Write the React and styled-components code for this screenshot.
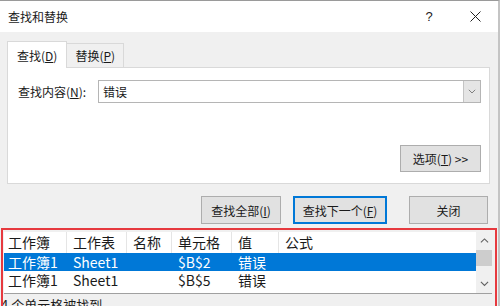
import React from 'react';
import styled, { createGlobalStyle } from 'styled-components';

const GlobalStyle = createGlobalStyle`
  html, body {
    margin: 0;
    padding: 0;
    width: 500px;
    height: 306px;
    overflow: hidden;
    background: #f0f0f0;
  }
  * { box-sizing: border-box; }
`;

const FONT = `"Noto Sans CJK SC", "Microsoft YaHei", "Noto Sans", sans-serif`;

const Window = styled.div`
  position: relative;
  width: 500px;
  height: 306px;
  background: #f0f0f0;
  border-top: 1px solid #9a9a9a;
  border-right: 2px solid #c4c4c4;
  font-family: ${FONT};
  font-size: 12px;
  color: #1a1a1a;
  overflow: hidden;
`;

const TitleBar = styled.div`
  height: 31px;
  background: #fff;
  display: flex;
  align-items: center;
  padding-left: 8px;
`;

const Title = styled.div`
  flex: 1;
  font-size: 12px;
`;

const TitleButton = styled.div`
  width: 46px;
  height: 31px;
  display: flex;
  align-items: center;
  justify-content: center;
  font-family: "Liberation Sans", sans-serif;
  font-size: 13px;
  color: #222;
`;

const Body = styled.div`
  padding: 8px 8px 0 7px;
`;

const TabRow = styled.div`
  display: flex;
  align-items: flex-end;
  height: 27px;
`;

const Tab = styled.div`
  height: ${(p) => (p.$active ? '27px' : '24px')};
  padding: 0 ${(p) => (p.$active ? '9px' : '8px')};
  display: flex;
  align-items: center;
  background: ${(p) => (p.$active ? '#fff' : '#f0f0f0')};
  border: 1px solid #d9d9d9;
  border-bottom: none;
  ${(p) => (p.$active ? 'margin-bottom: -1px; position: relative; z-index: 1;' : 'border-left: none;')}
`;

const U = styled.span`
  text-decoration: underline;
`;

const Panel = styled.div`
  height: 117px;
  background: #fff;
  border: 1px solid #d9d9d9;
  padding: 12px 8px 0 10px;
  display: flex;
  flex-direction: column;
`;

const FieldRow = styled.div`
  display: flex;
  align-items: center;
  gap: 4px;
`;

const Label = styled.div`
  width: 76px;
`;

const Combo = styled.div`
  flex: 1;
  height: 23px;
  display: flex;
  border: 1px solid #b5b5b5;
  background: #fff;
`;

const ComboText = styled.div`
  flex: 1;
  padding-left: 4px;
  display: flex;
  align-items: center;
`;

const ComboArrow = styled.div`
  width: 17px;
  background: #e5e5e5;
  border-left: 1px solid #c4c4c4;
  display: flex;
  align-items: center;
  justify-content: center;
`;

const OptionsRow = styled.div`
  display: flex;
  justify-content: flex-end;
  margin-top: 42px;
`;

const Button = styled.div`
  height: ${(p) => p.$h || 28}px;
  width: ${(p) => p.$w}px;
  display: flex;
  align-items: center;
  justify-content: center;
  background: #e1e1e1;
  border: ${(p) => (p.$default ? '2px solid #0078d7' : '1px solid #adadad')};
  font-size: 12px;
  color: #1a1a1a;
`;

const ButtonRow = styled.div`
  display: flex;
  justify-content: flex-end;
  padding-top: 12px;
  padding-right: 2px;
`;

const Gap = styled.div`
  width: ${(p) => p.$w}px;
`;

const Results = styled.div`
  margin: 8px 6px 0 4px;
  height: 62px;
  background: #fff;
  border-bottom: 1px solid #a0a0a0;
  display: flex;
  font-size: 14px;
`;

const Table = styled.div`
  flex: 1;
  display: flex;
  flex-direction: column;
`;

const Row = styled.div`
  height: ${(p) => (p.$header ? 21 : 18)}px;
  line-height: ${(p) => (p.$header ? 21 : 18)}px;
  display: grid;
  grid-template-columns: 63px 60px 45px 60px 47px 1fr;
  align-items: center;
  background: ${(p) => (p.$selected ? '#0078d7' : 'transparent')};
  color: ${(p) => (p.$selected ? '#fff' : '#1a1a1a')};
`;

const Cell = styled.div`
  padding-left: 6px;
  height: 100%;
  white-space: nowrap;
  overflow: hidden;
  border-right: ${(p) => (p.$header ? '1px solid #e5e5e5' : 'none')};
  &:first-child { padding-left: 4px; }
  &:last-child { border-right: none; }
`;

const ScrollBar = styled.div`
  width: 16px;
  background: #f0f0f0;
  display: flex;
  flex-direction: column;
`;

const ScrollArrow = styled.div`
  height: 18px;
  display: flex;
  align-items: center;
  justify-content: center;
`;

const ScrollTrack = styled.div`
  flex: 1;
`;

const ScrollThumb = styled.div`
  height: 16px;
  background: #cdcdcd;
`;

const Status = styled.div`
  padding: 1px 0 0 1px;
  font-size: 13px;
  white-space: nowrap;
`;

const Highlight = styled.div`
  position: absolute;
  left: 1px;
  top: 227px;
  width: 496px;
  height: 90px;
  border: 2px solid #e6393e;
  pointer-events: none;
`;

const Chevron = ({ up, color = '#606060', size = 9 }) => (
  <svg width={size} height={size * 0.6} viewBox="0 0 10 6">
    <path
      d={up ? 'M1 5 L5 1 L9 5' : 'M1 1 L5 5 L9 1'}
      fill="none"
      stroke={color}
      strokeWidth="1.2"
    />
  </svg>
);

const CloseIcon = () => (
  <svg width="11" height="11" viewBox="0 0 11 11">
    <path d="M0.5 0.5 L10.5 10.5 M10.5 0.5 L0.5 10.5" stroke="#222" strokeWidth="1" />
  </svg>
);

const columns = ['工作簿', '工作表', '名称', '单元格', '值', '公式'];
const results = [
  ['工作簿1', 'Sheet1', '', '$B$2', '错误', ''],
  ['工作簿1', 'Sheet1', '', '$B$5', '错误', ''],
];

export default function App() {
  return (
    <>
      <GlobalStyle />
      <Window>
        <TitleBar>
          <Title>查找和替换</Title>
          <TitleButton>?</TitleButton>
          <TitleButton>
            <CloseIcon />
          </TitleButton>
        </TitleBar>
        <Body>
          <TabRow>
            <Tab $active>
              查找(<U>D</U>)
            </Tab>
            <Tab>
              替换(<U>P</U>)
            </Tab>
          </TabRow>
          <Panel>
            <FieldRow>
              <Label>
                查找内容(<U>N</U>):
              </Label>
              <Combo>
                <ComboText>错误</ComboText>
                <ComboArrow>
                  <Chevron color="#7a7a7a" size={8} />
                </ComboArrow>
              </Combo>
            </FieldRow>
            <OptionsRow>
              <Button $w={81} $h={27}>
                选项(<U>T</U>)&nbsp;&gt;&gt;
              </Button>
            </OptionsRow>
          </Panel>
          <ButtonRow>
            <Button $w={80}>
              查找全部(<U>I</U>)
            </Button>
            <Gap $w={12} />
            <Button $w={94} $default>
              查找下一个(<U>F</U>)
            </Button>
            <Gap $w={22} />
            <Button $w={79}>关闭</Button>
          </ButtonRow>
        </Body>
        <Results>
          <Table>
            <Row $header>
              {columns.map((c) => (
                <Cell key={c} $header>
                  {c}
                </Cell>
              ))}
            </Row>
            {results.map((r, i) => (
              <Row key={i} $selected={i === 0}>
                {r.map((v, j) => (
                  <Cell key={j}>{v}</Cell>
                ))}
              </Row>
            ))}
          </Table>
          <ScrollBar>
            <ScrollArrow>
              <Chevron up />
            </ScrollArrow>
            <ScrollThumb />
            <ScrollTrack />
            <ScrollArrow>
              <Chevron />
            </ScrollArrow>
          </ScrollBar>
        </Results>
        <Status>4 个单元格被找到</Status>
        <Highlight />
      </Window>
    </>
  );
}
